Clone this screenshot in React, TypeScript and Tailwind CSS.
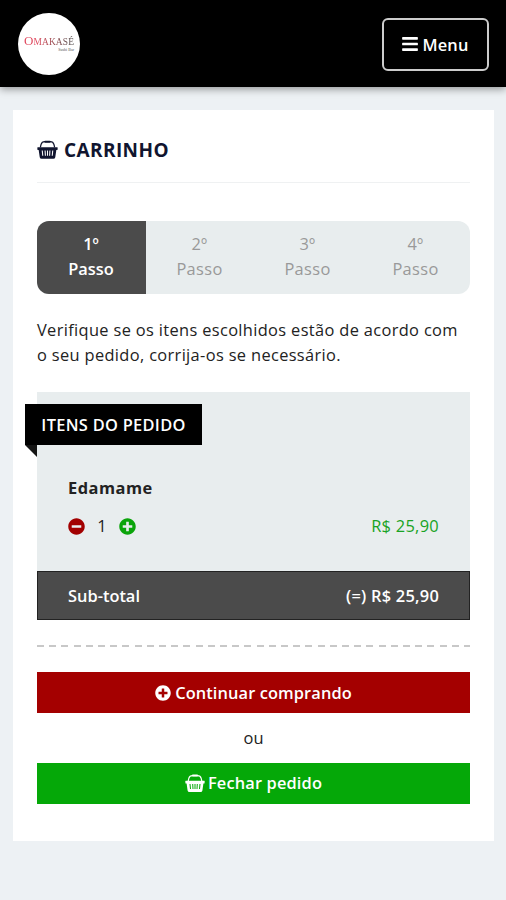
import { FaBars, FaMinusCircle, FaPlusCircle } from "react-icons/fa";

const steps = ["1º", "2º", "3º", "4º"];

function Basket({ className }: { className?: string }) {
  return (
    <svg viewBox="0 0 20 18" className={className} fill="none" stroke="currentColor">
      <path d="M3.2 7 3.8 4.4Q4.6 1.6 7.4 1.6H12.6Q15.4 1.6 16.2 4.4L16.8 7" strokeWidth="1.2" />
      <path d="M7.9 1.6H12.1" strokeWidth="2" strokeLinecap="round" />
      <path
        fillRule="evenodd"
        fill="currentColor"
        stroke="none"
        d="M.8 6.8H19.2Q19.8 6.8 19.7 7.6L19.5 9.4H18.4L17.4 16.4Q17.1 17.9 15.6 17.9H4.4Q2.9 17.9 2.6 16.4L1.6 9.4H.5L.3 7.6Q.2 6.8 .8 6.8ZM4.5 10 5 15H6L5.5 10ZM7.2 10 7.5 15H8.5L8.2 10ZM9.5 10V15H10.5V10ZM11.8 10 11.5 15H12.5L12.8 10ZM14.5 10 14 15H15L15.5 10Z"
      />
    </svg>
  );
}

export default function App() {
  return (
    <div className="min-h-[900px] bg-[#edf1f4] font-['Open_Sans',sans-serif] text-[16.4px] leading-[25px] text-[#222]">
      {/* Top bar */}
      <header className="flex h-[87px] items-center justify-between bg-black pl-[18px] pr-[17px] shadow-[0_2px_8px_rgba(0,0,0,0.4)]">
        <div className="flex h-[62px] w-[62px] flex-col items-center justify-center rounded-full bg-white pb-0.5 font-['Liberation_Serif',serif]">
          <div className="bg-gradient-to-r from-[#e0455b] from-25% to-[#444] bg-clip-text text-[9.4px] leading-[13px] tracking-[0.15px] text-transparent">
            <span className="text-[13px]">O</span>MAKASÉ
          </div>
          <span className="-mt-0.5 mr-1.5 self-end text-[4px] leading-[5px] text-[#555]">Sushi Bar</span>
        </div>
        <button className="mt-px flex h-[53px] w-[107px] items-center justify-center gap-1 rounded-md border-2 border-[#ccc] font-semibold text-white">
          <FaBars className="h-[18px] w-4" />
          <span className="tracking-[0.2px]">Menu</span>
        </button>
      </header>

      <main className="ml-[13px] mr-3 mt-[23px] h-[731px] bg-white px-6 pt-7">
        <h1 className="flex h-[45px] items-start gap-[7px] border-b border-[#eff1f2] text-[19px] font-bold text-[#11152f]">
          <Basket className="mt-[2px] h-[19px] w-[21px]" />
          <span className="-ml-px tracking-[0.4px]">CARRINHO</span>
        </h1>

        {/* Checkout steps */}
        <div className="mt-[38px] grid h-[73px] grid-cols-[109px_repeat(3,1fr)] overflow-hidden rounded-xl bg-[#e8edee]">
          {steps.map((step, i) => (
            <div
              key={step}
              className={`pr-px pt-[11px] text-center leading-[24.5px] ${i === 0 ? "bg-[#4b4b4b] font-semibold text-white" : "tracking-[0.35px] text-[#999]"}`}
            >
              {step}
              <br />
              Passo
            </div>
          ))}
        </div>

        <p className="mt-6 h-[50px] whitespace-nowrap leading-[24.5px] tracking-[0.35px]">
          Verifique se os itens escolhidos estão de acordo com
          <br />o seu pedido, corrija-os se necessário.
        </p>

        {/* Order items */}
        <section className="relative mt-6 h-[179px] bg-[#e8edee] px-[31px] pt-[83px]">
          <div className="absolute -left-3 top-3 flex h-[41px] w-[177px] items-center justify-center bg-black font-semibold text-white">
            <span className="tracking-[0.3px]">ITENS DO PEDIDO</span>
            <div className="absolute left-0 top-full h-3 w-3 bg-[#151515] [clip-path:polygon(0_0,100%_0,100%_100%)]" />
          </div>
          <h2 className="font-bold tracking-[0.5px]">Edamame</h2>
          <div className="mt-[13px] flex items-center">
            <FaMinusCircle className="mt-px h-[17px] w-[17px] text-[#a20000]" />
            <span className="w-[34px] text-center">1</span>
            <FaPlusCircle className="mt-px h-[17px] w-[17px] text-[#0aa40a]" />
            <span className="ml-auto tracking-[0.3px] text-[#18a324]">R$ 25,90</span>
          </div>
        </section>
        <div className="flex h-[49px] items-center justify-between border border-[#222] bg-[#4b4b4b] px-[30px] font-semibold text-white">
          <span>Sub-total</span>
          <span className="tracking-[0.25px]">(=) R$ 25,90</span>
        </div>

        <div className="mt-[25px] h-[2px] bg-[repeating-linear-gradient(90deg,#c8c8c8_0_7px,transparent_7px_12.2px)]" />

        <button className="mt-[25px] flex h-[41px] w-full items-center justify-center gap-1 bg-[#a40000] font-semibold text-white">
          <FaPlusCircle className="h-4 w-4" />
          <span className="tracking-[0.1px]">Continuar comprando</span>
        </button>
        <div className="flex h-[50px] items-center justify-center pb-px">ou</div>
        <button className="flex h-[41px] w-full items-center justify-center gap-[3px] bg-[#05a808] pb-0.5 font-semibold text-white">
          <Basket className="h-[18px] w-5" />
          <span className="tracking-[0.15px]">Fechar pedido</span>
        </button>
      </main>
    </div>
  );
}
